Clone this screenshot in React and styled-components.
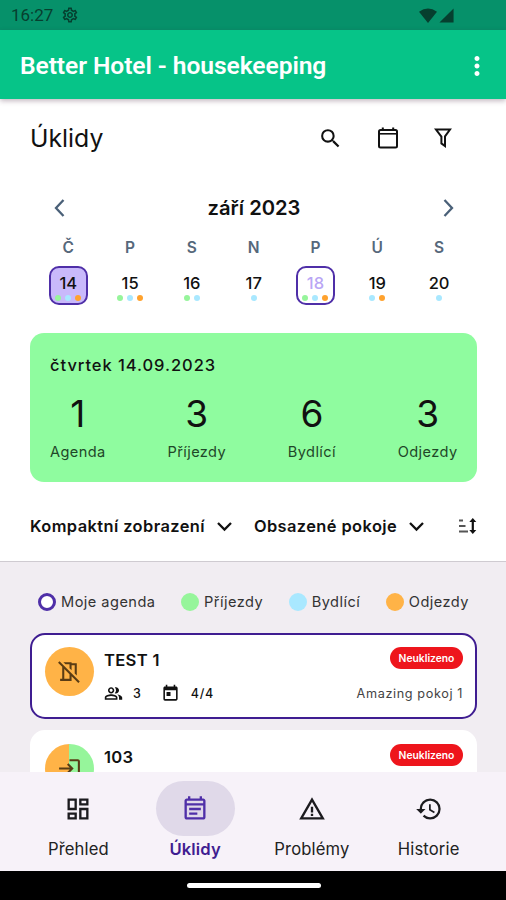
import React from 'react'
import styled, { createGlobalStyle } from 'styled-components'
import {
  MdSearch,
  MdOutlineDashboard,
  MdOutlineEventNote,
  MdWarningAmber,
  MdHistory,
  MdOutlinePeopleAlt,
  MdToday,
  MdOutlineNoMeetingRoom,
  MdLogin,
  MdMoreVert,
  MdOutlineSettings,
  MdSignalCellular4Bar,
} from 'react-icons/md'

const GREEN = '#96f59b'
const BLUE = '#a9e8ff'
const ORANGE = '#ffb347'
const PURPLE = '#3f1d91'

const days = [
  { name: 'Č', num: 14, dots: [GREEN, BLUE, '#ffa22e'], selected: true },
  { name: 'P', num: 15, dots: [GREEN, BLUE, '#ffa22e'] },
  { name: 'S', num: 16, dots: [GREEN, BLUE] },
  { name: 'N', num: 17, dots: [BLUE] },
  { name: 'P', num: 18, dots: [GREEN, BLUE, '#ffa22e'], today: true },
  { name: 'Ú', num: 19, dots: [BLUE, '#ffa22e'] },
  { name: 'S', num: 20, dots: [BLUE] },
]

const stats = [
  { value: 1, label: 'Agenda' },
  { value: 3, label: 'Příjezdy' },
  { value: 6, label: 'Bydlící' },
  { value: 3, label: 'Odjezdy' },
]

const legend = [
  { label: 'Moje agenda', ring: true },
  { label: 'Příjezdy', color: GREEN },
  { label: 'Bydlící', color: BLUE },
  { label: 'Odjezdy', color: ORANGE },
]

const tabs = [
  { label: 'Přehled', icon: MdOutlineDashboard },
  { label: 'Úklidy', icon: MdOutlineEventNote, active: true },
  { label: 'Problémy', icon: MdWarningAmber },
  { label: 'Historie', icon: MdHistory },
]

function Chevron({ d, w, h, color, stroke }) {
  return (
    <svg width={w} height={h} viewBox={`0 0 ${w} ${h}`} fill="none">
      <path d={d} stroke={color} strokeWidth={stroke} />
    </svg>
  )
}

function Dropdown({ label }) {
  return (
    <DropdownHolder>
      {label}
      <Chevron d="M1 2 L7.5 8.5 L14 2" w={15} h={11} color="#111" stroke={2.3} />
    </DropdownHolder>
  )
}

function RoomCard({ name, mine, avatar, icon, children }) {
  return (
    <RoomHolder $mine={mine}>
      <Avatar $bg={avatar}>{icon}</Avatar>
      <RoomBody>
        <RoomTop>
          <RoomName>{name}</RoomName>
          <Badge>Neuklizeno</Badge>
        </RoomTop>
        {children}
      </RoomBody>
    </RoomHolder>
  )
}

export default function App() {
  return (
    <Screen>
      <GlobalStyle />
      <StatusBar>
        <Clock>16:27</Clock>
        <MdOutlineSettings size={18} />
        <Signals>
          <svg width="18" height="15" viewBox="0 0 18 15">
            <path d="M0 3.8 Q9 -3 18 3.8 L9 15 Z" fill="currentColor" />
          </svg>
          <MdSignalCellular4Bar size={17} />
        </Signals>
      </StatusBar>
      <AppBar>
        <AppTitle>Better Hotel - housekeeping</AppTitle>
        <MdMoreVert size={30} />
      </AppBar>

      <Top>
        <HeadRow>
          <Heading>Úklidy</Heading>
          <Actions>
            <MdSearch size={25} />
            <svg width="20" height="22" viewBox="0 0 20 22" fill="none" stroke="currentColor">
              <rect x="1" y="3" width="18" height="17.6" rx="1.5" strokeWidth="2" />
              <path d="M1 6.8 H19" strokeWidth="1.6" />
              <path d="M4.8 0.5 V3 M15.2 0.5 V3" strokeWidth="2" />
            </svg>
            <svg width="20" height="22" viewBox="0 0 20 22" fill="none" stroke="currentColor" strokeWidth="2">
              <path d="M3 2.5 H17 L12 9.4 V19 L8.4 16.4 V9.6 Z" />
            </svg>
          </Actions>
        </HeadRow>

        <MonthRow>
          <Chevron d="M9.5 1 L2 9 L9.5 17" w={11} h={18} color="#4a6078" stroke={2.3} />
          <Month>září 2023</Month>
          <Chevron d="M1.5 1 L9 9 L1.5 17" w={11} h={18} color="#4a6078" stroke={2.3} />
        </MonthRow>

        <Week>
          {days.map((d) => (
            <DayColumn key={d.num}>
              <DayName>{d.name}</DayName>
              <DayCell $selected={d.selected} $today={d.today}>
                {d.num}
                <Dots>
                  {d.dots.map((c, i) => (
                    <Dot key={i} $color={c} />
                  ))}
                </Dots>
              </DayCell>
            </DayColumn>
          ))}
        </Week>

        <Summary>
          <SummaryDate>čtvrtek 14.09.2023</SummaryDate>
          <StatRow>
            {stats.map((s) => (
              <Stat key={s.label}>
                <StatValue>{s.value}</StatValue>
                <StatLabel>{s.label}</StatLabel>
              </Stat>
            ))}
          </StatRow>
        </Summary>

        <Filters>
          <Dropdown label="Kompaktní zobrazení" />
          <Dropdown label="Obsazené pokoje" />
          <SortIcon width="19" height="18" viewBox="0 0 19 18" fill="none">
            <path d="M1 3.5 H5 M1 9 H7.5 M1 14.5 H10" stroke="#555" strokeWidth="2" />
            <path d="M14.8 3 V15" stroke="#111" strokeWidth="2.2" />
            <path d="M11.3 5 L14.8 1 L18.3 5 Z M11.3 13 L14.8 17 L18.3 13 Z" fill="#111" />
          </SortIcon>
        </Filters>
      </Top>

      <List>
        <Legend>
          {legend.map((l) => (
            <LegendItem key={l.label}>
              <LegendDot $color={l.color} $ring={l.ring} />
              {l.label}
            </LegendItem>
          ))}
        </Legend>
        <RoomCard name="TEST 1" mine avatar={ORANGE} icon={<MdOutlineNoMeetingRoom size={25} />}>
          <RoomInfo>
            <MdOutlinePeopleAlt size={19} />
            <Count $left={10}>3</Count>
            <TodayIcon size={19} />
            <Count $left={11}>4/4</Count>
            <RoomType>Amazing pokoj 1</RoomType>
          </RoomInfo>
        </RoomCard>
        <RoomCard
          name="103"
          avatar={`linear-gradient(90deg, ${ORANGE} 49%, ${GREEN} 49%)`}
          icon={<MdLogin size={25} />}
        />
      </List>

      <Nav>
        {tabs.map(({ label, icon: Icon, active }) => (
          <Tab key={label} $active={active}>
            <TabPill $active={active}>
              <Icon size={28} />
            </TabPill>
            {label}
          </Tab>
        ))}
      </Nav>
      <SystemBar>
        <HomeHandle />
      </SystemBar>
    </Screen>
  )
}

const GlobalStyle = createGlobalStyle`
* { box-sizing: border-box; }
body { margin: 0; }
svg { display: block; flex-shrink: 0; }
`

const Screen = styled.div`
width: 506px;
height: 900px;
overflow: hidden;
display: flex;
flex-direction: column;
background: #fff;
color: #111;
font-family: Inter, sans-serif;
`

const StatusBar = styled.div`
height: 30px;
flex-shrink: 0;
display: flex;
align-items: center;
padding: 0 51px 0 11px;
background: #06916a;
color: #063f2f;
`

const Clock = styled.div`
width: 50px;
font-family: Roboto, sans-serif;
font-size: 17px;
`

const Signals = styled.div`
display: flex;
align-items: center;
gap: 1px;
margin-left: auto;
`

const AppBar = styled.div`
height: 69px;
flex-shrink: 0;
display: flex;
align-items: center;
justify-content: space-between;
padding: 2px 14px 0 20px;
background: #06c488;
color: #fff;
box-shadow: 0 2px 5px rgba(60, 20, 50, 0.3);
z-index: 1;
`

const AppTitle = styled.div`
font-family: Roboto, sans-serif;
font-weight: 600;
font-size: 24.6px;
letter-spacing: -0.08px;
`

const Top = styled.div`
height: 463px;
flex-shrink: 0;
padding: 19px 29px 0 30px;
border-bottom: 1px solid #cfcbd1;
`

const HeadRow = styled.div`
height: 40px;
display: flex;
align-items: center;
justify-content: space-between;
`

const Heading = styled.div`
font-size: 24.8px;
`

const Actions = styled.div`
display: flex;
align-items: center;
gap: 35px;
padding-right: 24px;
`

const MonthRow = styled.div`
height: 40px;
margin-top: 30px;
padding: 0 23px 0 24px;
display: flex;
align-items: center;
justify-content: space-between;
`

const Month = styled.div`
font-size: 20.2px;
line-height: 24px;
padding-bottom: 1px;
font-weight: 600;
`

const Week = styled.div`
display: grid;
grid-template-columns: repeat(7, 61.8px);
margin: 8px 0 0 7.4px;
`

const DayColumn = styled.div`
display: flex;
flex-direction: column;
align-items: center;
`

const DayName = styled.div`
height: 30px;
line-height: 23px;
font-size: 15.5px;
font-weight: 600;
color: #56687b;
`

const DayCell = styled.div`
width: 39px;
height: 39px;
display: flex;
flex-direction: column;
align-items: center;
margin-bottom: 1px;
padding-top: 6px;
border: 2px solid ${(p) => (p.$selected || p.$today ? '#4f2fa8' : 'transparent')};
border-radius: 10px;
background: ${(p) => (p.$selected ? '#c9b9fb' : 'transparent')};
color: ${(p) => (p.$today ? '#b9a6f5' : '#111')};
font-size: 16.5px;
line-height: 19px;
font-weight: 500;
`

const Dots = styled.div`
display: flex;
gap: 4px;
margin-top: 2px;
`

const Dot = styled.div`
width: 6px;
height: 6px;
border-radius: 50%;
background: ${(p) => p.$color};
`

const Summary = styled.div`
height: 149px;
margin-top: 27px;
padding: 22px 19.5px 0 20px;
border-radius: 14px;
background: #8ffc9f;
`

const SummaryDate = styled.div`
height: 22px;
line-height: 21px;
font-size: 16.5px;
font-weight: 500;
letter-spacing: 0.95px;
`

const StatRow = styled.div`
display: flex;
justify-content: space-between;
margin-top: 16px;
`

const Stat = styled.div`
display: flex;
flex-direction: column;
align-items: center;
`

const StatValue = styled.div`
height: 42px;
line-height: 42px;
font-size: 37px;
`

const StatLabel = styled.div`
height: 20px;
line-height: 20px;
margin-top: 7px;
font-size: 14.6px;
letter-spacing: 0.4px;
color: #1f4728;
`

const Filters = styled.div`
height: 40px;
margin-top: 24px;
display: flex;
align-items: center;
gap: 22px;
`

const DropdownHolder = styled.div`
display: flex;
align-items: center;
gap: 12px;
font-size: 16.4px;
font-weight: 600;
letter-spacing: 0.42px;
white-space: nowrap;
`

const SortIcon = styled.svg`
margin-left: auto;
`

const List = styled.div`
height: 210px;
flex-shrink: 0;
overflow: hidden;
padding: 30px 29px 0 30px;
background: #f1edf2;
`

const Legend = styled.div`
height: 20px;
margin-bottom: 21px;
padding: 0 8px;
display: flex;
align-items: center;
justify-content: space-between;
`

const LegendItem = styled.div`
display: flex;
align-items: center;
gap: 5px;
font-size: 14.6px;
letter-spacing: 0.45px;
color: #333;
`

const LegendDot = styled.div`
width: 18px;
height: 18px;
border-radius: 50%;
background: ${(p) => p.$color || '#fff'};
border: ${(p) => (p.$ring ? '3px solid #4f2fa8' : 'none')};
`

const RoomHolder = styled.div`
height: 86px;
margin-bottom: 11px;
display: flex;
padding: 12px 12px 0 13px;
border: 2px solid ${(p) => (p.$mine ? PURPLE : '#fff')};
border-radius: 15px;
background: #fff;
`

const Avatar = styled.div`
width: 49px;
height: 49px;
flex-shrink: 0;
display: flex;
align-items: center;
justify-content: center;
border-radius: 50%;
background: ${(p) => p.$bg};
color: #5a3c14;
`

const RoomBody = styled.div`
flex: 1;
margin-left: 10px;
`

const RoomTop = styled.div`
display: flex;
justify-content: space-between;
`

const RoomName = styled.div`
height: 26px;
line-height: 26px;
font-size: 16.6px;
font-weight: 600;
letter-spacing: 0.3px;
`

const Badge = styled.div`
width: 73px;
height: 22px;
line-height: 22px;
border-radius: 11px;
background: #ee151c;
color: #fff;
text-align: center;
font-size: 10.3px;
font-weight: 600;
`

const RoomInfo = styled.div`
height: 20px;
margin-top: 10px;
display: flex;
align-items: center;
`

const Count = styled.div`
margin-left: ${(p) => p.$left}px;
font-size: 12.5px;
font-weight: 500;
letter-spacing: 0.8px;
`

const TodayIcon = styled(MdToday)`
margin-left: 19px;
`

const RoomType = styled.div`
margin-left: auto;
font-size: 12.7px;
letter-spacing: 0.6px;
color: #444;
`

const Nav = styled.div`
height: 99px;
flex-shrink: 0;
display: flex;
padding: 9px 19px 0 20px;
background: #f7f2f9;
`

const Tab = styled.div`
flex: 1;
display: flex;
flex-direction: column;
align-items: center;
font-size: 16.6px;
line-height: 27px;
letter-spacing: 0.15px;
font-weight: ${(p) => (p.$active ? 600 : 400)};
color: ${(p) => (p.$active ? PURPLE : '#222')};
`

const TabPill = styled.div`
width: 79px;
height: 55px;
display: flex;
align-items: center;
justify-content: center;
border-radius: 28px;
background: ${(p) => (p.$active ? '#e0d9e9' : 'transparent')};
color: ${(p) => (p.$active ? '#4f2fa8' : '#1c1b1f')};
`

const SystemBar = styled.div`
height: 29px;
flex-shrink: 0;
display: flex;
justify-content: center;
align-items: center;
padding-left: 1px;
background: #000;
`

const HomeHandle = styled.div`
width: 134px;
height: 5px;
border-radius: 3px;
background: #fff;
`
